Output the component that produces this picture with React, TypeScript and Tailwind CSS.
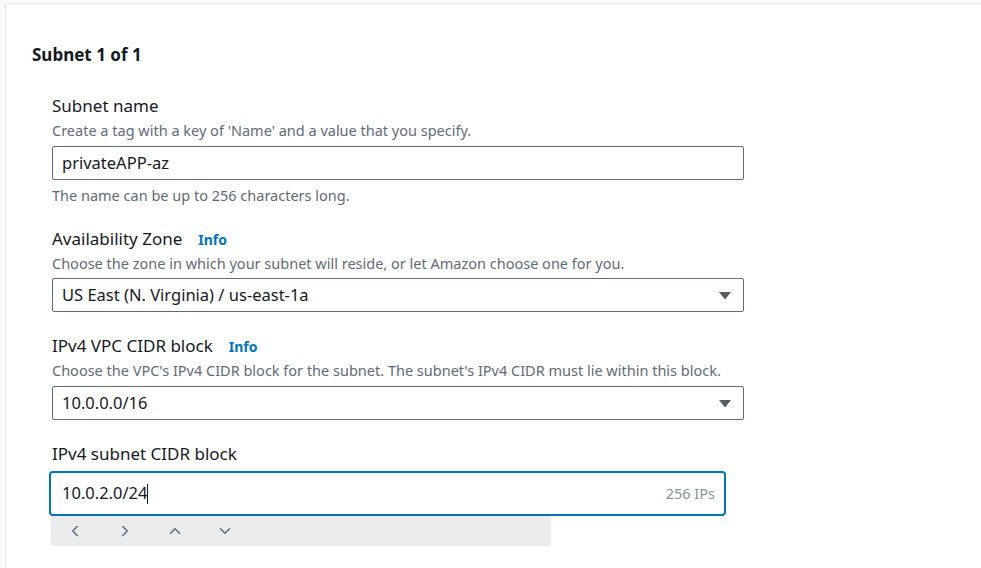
import { ChevronLeft, ChevronRight, ChevronUp, ChevronDown } from 'lucide-react';

const font = { fontFamily: '"Noto Sans", "Open Sans", Arial, sans-serif' };

function Caret() {
  return (
    <svg width="14" height="9" viewBox="0 0 14 9" className="shrink-0">
      <path d="M1 1h12L7 8.5z" fill="#545b64" />
    </svg>
  );
}

function Label({ text, info }: { text: string; info?: boolean }) {
  return (
    <div className="flex items-center h-[24px] text-[17px] text-[#16191f]">
      <span>{text}</span>
      {info && <span className="ml-[16px] text-[14px] font-bold text-[#0073bb]">Info</span>}
    </div>
  );
}

function Desc({ text }: { text: string }) {
  return <div className="h-[20px] leading-[20px] text-[14.5px] text-[#5f6b7a]">{text}</div>;
}

function SelectBox({ value }: { value: string }) {
  return (
    <div className="flex items-center justify-between w-[692px] h-[34px] border border-[#5f6b7a] rounded-[2px] bg-white pl-[9px] pr-[11px] text-[16.5px] text-[#16191f]">
      <span>{value}</span>
      <Caret />
    </div>
  );
}

export default function App() {
  return (
    <div className="w-[981px] h-[568px] bg-[#fafafa] overflow-hidden" style={font}>
      <div className="ml-[5px] mt-[3px] h-[565px] bg-white border-l border-t border-[#e9ebed]">
        <div className="pl-[26px] pt-[39px]">
          <h2 className="h-[24px] leading-[24px] text-[17px] font-bold text-[#16191f]">Subnet 1 of 1</h2>

          <div className="pl-[20px] pt-[27px]">
            <Label text="Subnet name" />
            <div className="mt-[2px]">
              <Desc text="Create a tag with a key of 'Name' and a value that you specify." />
            </div>
            <div className="mt-[6px] w-[692px] h-[34px] border border-[#5f6b7a] rounded-[2px] flex items-center pl-[9px] text-[16.5px] text-[#16191f]">
              privateAPP-az
            </div>
            <div className="mt-[5px]">
              <Desc text="The name can be up to 256 characters long." />
            </div>

            <div className="mt-[22px]">
              <Label text="Availability Zone" info />
            </div>
            <div className="mt-[2px]">
              <Desc text="Choose the zone in which your subnet will reside, or let Amazon choose one for you." />
            </div>
            <div className="mt-[5px]">
              <SelectBox value="US East (N. Virginia) / us-east-1a" />
            </div>

            <div className="mt-[22px]">
              <Label text="IPv4 VPC CIDR block" info />
            </div>
            <div className="mt-[2px]">
              <Desc text="Choose the VPC's IPv4 CIDR block for the subnet. The subnet's IPv4 CIDR must lie within this block." />
            </div>
            <div className="mt-[6px]">
              <SelectBox value="10.0.0.0/16" />
            </div>

            <div className="mt-[22px]">
              <Label text="IPv4 subnet CIDR block" />
            </div>
            <div className="mt-[5px] -ml-[3px] w-[677px] h-[45px] border-2 border-[#0073bb] rounded-[4px] flex items-center justify-between pl-[11px] pr-[9px] text-[16.5px] text-[#16191f]">
              <span className="flex items-center">
                10.0.2.0/24
                <span className="inline-block w-px h-[20px] bg-[#16191f]" />
              </span>
              <span className="text-[14.5px] text-[#879596]">256 IPs</span>
            </div>
            <div className="-ml-px w-[500px] h-[30px] bg-[#e9ebed] rounded-b-[4px] flex items-center pl-[15px] gap-[32px] text-[#5f6b7a]">
              <ChevronLeft size={18} strokeWidth={2} />
              <ChevronRight size={18} strokeWidth={2} />
              <ChevronUp size={18} strokeWidth={2} />
              <ChevronDown size={18} strokeWidth={2} />
            </div>
          </div>
        </div>
      </div>
    </div>
  );
}
